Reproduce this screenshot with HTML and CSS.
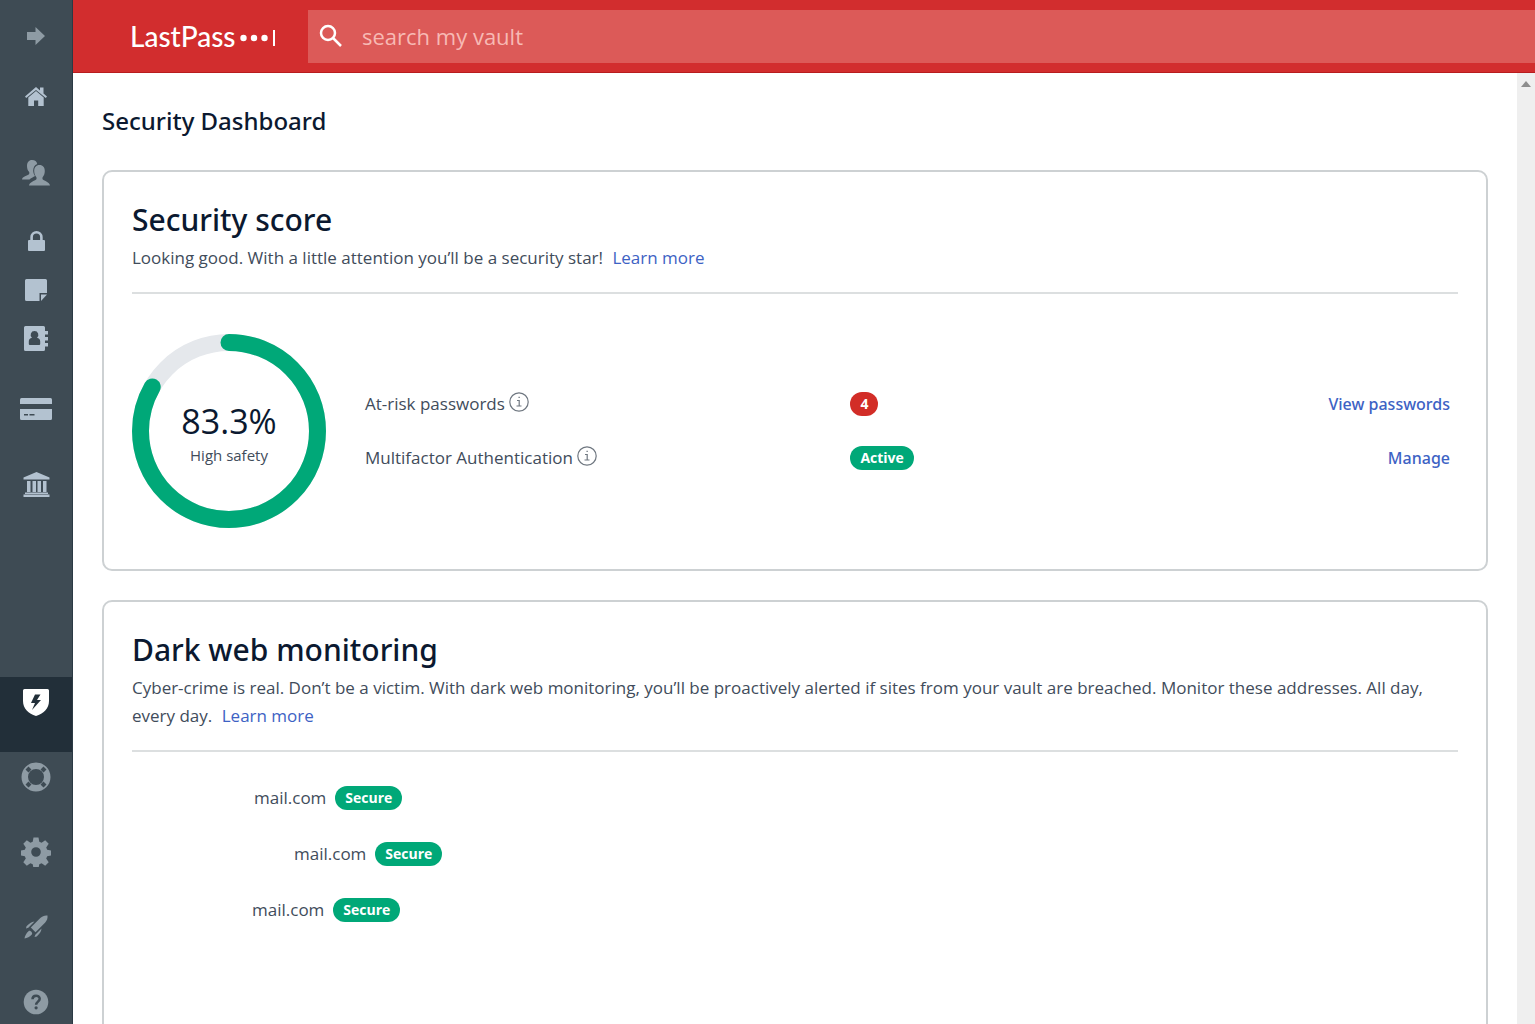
FILE: index.html
```html
<!DOCTYPE html>
<html lang="en">
<head>
  <meta charset="UTF-8">
  <meta name="viewport" content="width=device-width, initial-scale=1.0">
  <title>Security Dashboard</title>
  <link rel="stylesheet" href="styles.css">
</head>
<body>
  <nav class="sidebar">
    <button class="nav-toggle" aria-label="Expand menu">
      <svg width="18" height="18" viewBox="0 0 18 18"><path d="M0 5h8.500V0L18 9l-9.500 9v-5H0z"/></svg>
    </button>
    <div class="nav-group">
      <a href="#" class="nav-item light wide-gap" aria-label="All items">
        <svg width="22" height="19" viewBox="0 0 22 19"><path d="M11 0l4 3.500V.5h3.500v6L22 9.500 20.800 11 11 2.900 1.200 11 0 9.500z"/><path d="M11 4.100l7.700 6.500V19h-5.500v-5.500H9V19H3.300v-8.400z"/></svg>
      </a>
      <a href="#" class="nav-item" aria-label="Sharing center">
        <svg width="28" height="26" viewBox="0 0 28 26"><path d="M10 0c3 0 4.800 1.500 5.200 4-2.600 1.200-4 3.500-4 6.500 0 2.200.7 4.200 1.900 5.500-1.700 1.300-4.400 1.900-5.600 3.600H0c.2-3.500 5.500-3.600 7-5.400.5-.7.4-1.700 0-2.400C5.800 10.500 5 8.700 5 6c0-3.600 1.800-6 5-6z"/><path d="M17.500 5c3.400 0 5.300 2.400 5.300 6 0 2.700-.8 4.500-2 6-.5.700-.5 1.900 0 2.500 1.500 1.600 6.700 2.300 7.200 6H7c.5-3.700 5.700-4.400 7.200-6 .5-.6.500-1.800 0-2.500-1.200-1.500-2-3.300-2-6 0-3.600 1.900-6 5.300-6z"/></svg>
      </a>
    </div>
    <div class="nav-group vault">
      <a href="#" class="nav-item light" aria-label="Passwords">
        <svg width="17" height="20" viewBox="0 0 17 20"><path fill-rule="evenodd" d="M2.300 9V6.200a6.200 6.200 0 0 1 12.400 0V9H16q1 0 1 1v9q0 1-1 1H1q-1 0-1-1v-9q0-1 1-1zm2.600 0h7.200V6.200a3.600 3.600 0 0 0-7.200 0z"/></svg>
      </a>
      <a href="#" class="nav-item light" aria-label="Notes">
        <svg width="22" height="22" viewBox="0 0 22 22"><path d="M1.500 0h19Q22 0 22 1.500V14h-7.500v8h-13Q0 22 0 20.500v-19Q0 0 1.500 0z"/><path d="M16 15.500h6L16 22z"/></svg>
      </a>
      <a href="#" class="nav-item light" aria-label="Addresses">
        <svg width="24" height="25" viewBox="0 0 24 25"><path fill-rule="evenodd" d="M1.500 0h18Q21 0 21 1.500V5h3v3.500h-3V11h3v3.500h-3V17h3v3.500h-3v3q0 1.500-1.500 1.500h-18Q0 25 0 23.500v-22Q0 0 1.500 0zM10.500 5a3.800 3.800 0 0 0-2.500 6.700c-2 .3-3.200 1.600-3.200 3.800V18q0 1 1 1h9.400q1 0 1-1v-2.500c0-2.200-1.200-3.500-3.200-3.800A3.800 3.800 0 0 0 10.500 5z"/></svg>
      </a>
    </div>
    <div class="nav-group accounts">
      <a href="#" class="nav-item light wide-gap" aria-label="Payment cards">
        <svg width="32" height="22" viewBox="0 0 32 22"><path d="M1.500 0h29Q32 0 32 1.500V6H0V1.500Q0 0 1.500 0z"/><path fill-rule="evenodd" d="M0 11h32v9.500q0 1.500-1.500 1.500h-29Q0 22 0 20.500zm4 5v1.500h4V16zm5.500 0v1.500h5V16z"/></svg>
      </a>
      <a href="#" class="nav-item light" aria-label="Bank accounts">
        <svg width="27" height="25" viewBox="0 0 27 25"><path d="M13.500 0L26.500 5.500V7.500H.5V5.500zM4 9h3.500v11H4zM9.500 9H13v11H9.500zM14.500 9H18v11h-3.500zM20 9h3.500v11H20zM2 20.500h23V22H2zM.5 22.500h26V25H.5z"/></svg>
      </a>
    </div>
    <div class="nav-group tools">
      <a href="#" class="nav-item active" aria-label="Security Dashboard" aria-current="page">
        <svg width="26" height="27" viewBox="0 0 26 27"><path fill-rule="evenodd" d="M1.500 0h23Q26 0 26 1.500V12c0 7.500-5.500 12.500-13 15C5.500 24.500 0 19.500 0 12V1.500Q0 0 1.500 0zM12 5.500L8 14h4l-3 7 9-10h-4l3.500-5.500z"/></svg>
      </a>
      <a href="#" class="nav-item" aria-label="Emergency access">
        <svg width="30" height="30" viewBox="0 0 30 30"><path fill-rule="evenodd" d="M15 .5a14.500 14.500 0 1 0 0 29 14.500 14.500 0 0 0 0-29zM15 7a8 8 0 1 1 0 16 8 8 0 0 1 0-16z"/><path class="cutout" d="M7.500 4.500l3 3-3 3-3-3zM22.500 4.500l3 3-3 3-3-3zM4.500 22.500l3-3 3 3-3 3zM25.500 22.500l-3 3-3-3 3-3z"/></svg>
      </a>
      <a href="#" class="nav-item" aria-label="Account settings">
        <svg width="30" height="30" viewBox="0 0 30 30"><path fill-rule="evenodd" d="M12.500.5h5l.8 4.300 2.300 1 3.600-2.500 3.500 3.500-2.500 3.600 1 2.300 4.100.8v5l-4.100.8-1 2.300 2.500 3.600-3.500 3.500-3.600-2.500-2.300 1-.8 4.300h-5l-.8-4.300-2.300-1-3.600 2.500-3.500-3.500 2.500-3.600-1-2.300-4.100-.8v-5l4.100-.8 1-2.300-2.500-3.600 3.500-3.500 3.600 2.500 2.300-1zM15 10.200a4.800 4.800 0 1 0 0 9.600 4.800 4.800 0 0 0 0-9.600z"/></svg>
      </a>
      <a href="#" class="nav-item" aria-label="Advanced options">
        <svg width="24" height="24" viewBox="0 0 24 24"><path d="M23.500.5c.3 3-.5 5-2.500 7.200l-9.500 9.500-4.700-4.700L16.300 3C18.500 1 20.500.2 23.500.5z"/><path d="M10.500 6.500L4.300 12.700 2 13.500l.5-2.200C5 8.500 7.500 6.700 10.500 6.500zM17.500 13.500l-6.200 6.200-.8 2.300 2.200-.5c2.800-2.500 4.600-5 4.800-8zM4.500 16.200c1.500-1.500 4.800 1.800 3.300 3.300C6 21.800 3 23.200.5 23.500.8 21 2.300 18 4.500 16.200z"/></svg>
      </a>
      <a href="#" class="nav-item" aria-label="Help">
        <svg width="26" height="26" viewBox="0 0 26 26"><circle cx="13" cy="13" r="12.300"/><path class="question" d="M9.500 10.300c0-4.700 7.200-4.700 7.200-.5 0 2.700-3.600 3-3.600 6"/><circle class="cutout" cx="13.100" cy="18.800" r="1.600"/></svg>
      </a>
    </div>
  </nav>

  <div class="page">
    <header class="topbar">
      <a href="#" class="logo">
        <span class="logo-name">LastPass</span>
        <svg width="38" height="20" viewBox="0 0 38 20"><circle cx="4.500" cy="12" r="3.200"/><circle cx="15" cy="12" r="3.200"/><circle cx="25.500" cy="12" r="3.200"/><path d="M34 4h2v16h-2z"/></svg>
      </a>
      <label class="search">
        <svg width="24" height="24" viewBox="0 0 24 24"><circle cx="9" cy="9" r="7"/><path d="M14 14l8 8"/></svg>
        <input type="search" placeholder="search my vault" aria-label="search my vault">
      </label>
    </header>

    <div class="body">
      <main class="content">
        <h1>Security Dashboard</h1>

        <section class="card score-card">
          <h2>Security score</h2>
          <p class="intro">Looking good. With a little attention you’ll be a security star! <a href="#">Learn more</a></p>
          <div class="score">
            <div class="ring">
              <svg width="194" height="194" viewBox="0 0 194 194">
                <circle class="ring-track" cx="97" cy="97" r="88.500"/>
                <circle class="ring-value" cx="97" cy="97" r="88.500" pathLength="100" stroke-dasharray="83.300 100" transform="rotate(-90 97 97)"/>
              </svg>
              <div class="ring-label">
                <strong>83.3%</strong>
                <span>High safety</span>
              </div>
            </div>
            <ul class="checks">
              <li>
                <div class="check-name">At-risk passwords
                  <svg class="info" width="20" height="20" viewBox="0 0 20 20"><circle cx="10" cy="10" r="9.200"/><path d="M8 8.500h2.200V14M7.500 14h5M9.500 5.300h1.300"/></svg>
                </div>
                <div class="check-status">
                  <span class="badge danger">4</span>
                  <a href="#">View passwords</a>
                </div>
              </li>
              <li>
                <div class="check-name">Multifactor Authentication
                  <svg class="info" width="20" height="20" viewBox="0 0 20 20"><circle cx="10" cy="10" r="9.200"/><path d="M8 8.500h2.200V14M7.500 14h5M9.500 5.300h1.300"/></svg>
                </div>
                <div class="check-status">
                  <span class="badge">Active</span>
                  <a href="#">Manage</a>
                </div>
              </li>
            </ul>
          </div>
        </section>

        <section class="card monitoring-card">
          <h2>Dark web monitoring</h2>
          <p class="intro">Cyber-crime is real. Don’t be a victim. With dark web monitoring, you’ll be proactively alerted if sites from your vault are breached. Monitor these addresses. All day, every day. <a href="#">Learn more</a></p>
          <ul class="addresses">
            <li class="indent-medium"><span>mail.com</span><span class="badge">Secure</span></li>
            <li class="indent-large"><span>mail.com</span><span class="badge">Secure</span></li>
            <li class="indent-small"><span>mail.com</span><span class="badge">Secure</span></li>
          </ul>
        </section>
      </main>
      <div class="scrollbar">
        <svg width="10" height="6" viewBox="0 0 10 6"><path d="M5 0l5 6H0z"/></svg>
      </div>
    </div>
  </div>
</body>
</html>
```

FILE: styles.css
```css
* {
  box-sizing: border-box;
}
body {
  margin: 0;
  display: flex;
  height: 100vh;
  overflow: hidden;
  font-family: "Open Sans", sans-serif;
  font-size: 17px;
  line-height: 28px;
  color: #414c5b;
  background: #fff;
}
a {
  color: #3d62c4;
  text-decoration: none;
}
h1, h2, p, ul {
  margin: 0;
  padding: 0;
}
ul {
  list-style: none;
}

/* Sidebar */
.sidebar {
  flex: none;
  width: 73px;
  background: #3e4b54;
  border-right: 1px solid #2b3a44;
  overflow: hidden;
}
.sidebar svg {
  fill: #8e9ba4;
}
.nav-toggle {
  display: flex;
  align-items: center;
  justify-content: center;
  width: 100%;
  height: 72px;
  padding: 0;
  border: none;
  background: none;
  cursor: pointer;
}
.nav-item {
  display: flex;
  align-items: center;
  justify-content: center;
  height: 49px;
}
.sidebar .light svg {
  fill: #b3c2d0;
}
.wide-gap {
  margin-bottom: 27px;
}
.vault {
  margin-top: 19px;
}
.accounts {
  margin-top: 21px;
}
.tools {
  margin-top: 168px;
}
.tools .nav-item {
  height: 75px;
  padding-bottom: 25px;
}
.tools .active {
  background: #222f39;
}
.sidebar .active svg {
  fill: #fff;
}
.sidebar .cutout {
  fill: #3e4b54;
}
.sidebar .question {
  fill: none;
  stroke: #3e4b54;
  stroke-width: 2.5;
}

/* Top bar */
.page {
  flex: 1;
  min-width: 0;
  display: flex;
  flex-direction: column;
}
.topbar {
  flex: none;
  display: flex;
  align-items: center;
  height: 73px;
  padding-left: 57px;
  background: #d22d2e;
  border-bottom: 1px solid #b81c1e;
}
.logo {
  display: flex;
  align-items: center;
  gap: 3px;
  width: 178px;
  color: #fff;
}
.logo svg {
  fill: #fff;
}
.logo-name {
  font-family: Lato, sans-serif;
  font-size: 28px;
  font-weight: 500;
}
.search {
  flex: 1;
  display: flex;
  align-items: center;
  gap: 19px;
  height: 53px;
  padding-left: 11px;
  background: #dc5a58;
}
.search svg {
  fill: none;
  stroke: #fff;
  stroke-width: 2.5;
}
.search input {
  flex: 1;
  padding: 0;
  border: none;
  outline: none;
  background: none;
  font: inherit;
  font-size: 22px;
  color: #fff;
}
.search input::placeholder {
  color: #f7b9b4;
}

/* Content */
.body {
  flex: 1;
  min-height: 0;
  display: flex;
}
.content {
  flex: 1;
  min-width: 0;
  padding: 28px 29px 0;
  overflow: hidden;
}
h1, h2 {
  font-family: "Noto Sans", "Open Sans", sans-serif;
  font-weight: 500;
  line-height: 40px;
  color: #0b1930;
}
h1 {
  font-size: 24px;
}
h2 {
  font-size: 30px;
}
.card {
  margin-top: 29px;
  padding: 28px 28px 41px;
  border: 2px solid #cdd1d3;
  border-radius: 10px;
}
.intro {
  margin-top: 4px;
  padding-bottom: 20px;
  border-bottom: 2px solid #dcdfe0;
}
.intro a {
  margin-left: 5px;
}
.score {
  display: flex;
  align-items: center;
  gap: 39px;
  padding-top: 40px;
}
.ring {
  position: relative;
  width: 194px;
  height: 194px;
}
.ring svg {
  display: block;
  fill: none;
  stroke-width: 17;
}
.ring-track {
  stroke: #e5e8ec;
}
.ring-value {
  stroke: #00a878;
  stroke-linecap: round;
}
.ring-label {
  position: absolute;
  inset: 0;
  display: flex;
  flex-direction: column;
  align-items: center;
  justify-content: center;
  padding-top: 8px;
}
.ring-label strong {
  font-size: 34px;
  font-weight: 400;
  line-height: 40px;
  color: #0b1930;
}
.ring-label span {
  font-size: 15px;
}
.checks {
  flex: 1;
  padding-right: 8px;
}
.checks li {
  display: grid;
  grid-template-columns: 17fr 21fr;
  align-items: center;
  height: 54px;
}
.check-name {
  display: flex;
  gap: 4px;
}
.check-status {
  display: flex;
  align-items: center;
  justify-content: space-between;
}
.check-status a {
  font-family: "Noto Sans", "Open Sans", sans-serif;
  font-size: 16px;
  font-weight: 500;
}
.info {
  margin-top: 2px;
  fill: none;
  stroke: #6f7780;
  stroke-width: 1.2;
}
.badge {
  padding: 0 10px;
  border-radius: 12px;
  background: #00a878;
  color: #fff;
  font-size: 14px;
  font-weight: 700;
  line-height: 24px;
}
.danger {
  background: #d22d27;
}
.monitoring-card {
  min-height: 460px;
}
.addresses {
  padding-top: 18px;
}
.addresses li {
  display: flex;
  align-items: center;
  gap: 9px;
  height: 56px;
}
.indent-small {
  padding-left: 120px;
}
.indent-medium {
  padding-left: 122px;
}
.indent-large {
  padding-left: 162px;
}

/* Scrollbar */
.scrollbar {
  flex: none;
  display: flex;
  justify-content: center;
  width: 18px;
  padding-top: 8px;
  background: #efefef;
}
.scrollbar svg {
  fill: #8d8d8d;
}
```
